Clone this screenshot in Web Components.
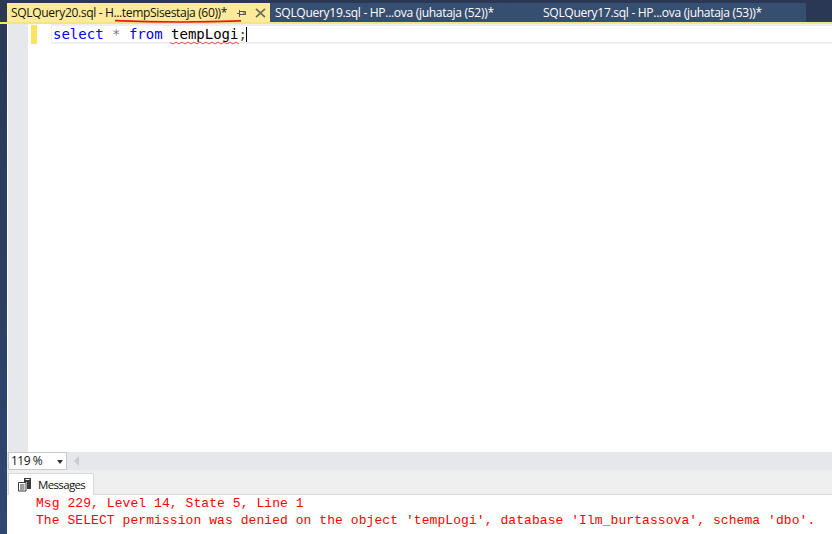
<!DOCTYPE html>
<html><head><meta charset="utf-8"><style>
html,body{margin:0;padding:0;height:534px;width:832px;overflow:hidden;background:#2b3b5a}
</style></head><body>
<ssms-window>
  <doc-tabs slot="tabs">
    <doc-tab active label="SQLQuery20.sql - H...tempSisestaja (60))*"></doc-tab>
    <doc-tab label="SQLQuery19.sql - HP...ova (juhataja (52))*" style="width:268px"></doc-tab>
    <doc-tab label="SQLQuery17.sql - HP...ova (juhataja (53))*" style="width:268px"></doc-tab>
  </doc-tabs>
  <sql-editor slot="editor"></sql-editor>
  <zoom-bar slot="zoom"></zoom-bar>
  <results-pane slot="results">
    <div>Msg 229, Level 14, State 5, Line 1</div>
    <div>The SELECT permission was denied on the object 'tempLogi', database 'Ilm_burtassova', schema 'dbo'.</div>
  </results-pane>
</ssms-window>
<script>
function def(name,html,init){
  customElements.define(name,class extends HTMLElement{
    constructor(){super();this.attachShadow({mode:'open'}).innerHTML=html;}
    connectedCallback(){init&&init(this);}
  });
}
def('ssms-window',`<style>
:host{display:flex;flex-direction:column;width:832px;height:534px;box-sizing:border-box;padding-top:3px;background:linear-gradient(#2a3854,#2c3f62 55%,#2f4773);font-family:"Open Sans","Noto Sans",sans-serif}
.body{flex:1;min-height:0;display:flex;flex-direction:column;margin-left:7px;background:#fff}
</style><slot name="tabs"></slot><div class="body"><slot name="editor"></slot><slot name="zoom"></slot><slot name="results"></slot></div>`);

def('doc-tabs',`<style>
:host{display:flex;height:19px;padding-left:7px;border-bottom:2px solid #f4e57c;flex:none}
</style><slot></slot>`);

def('doc-tab',`<style>
:host{display:block;position:relative;box-sizing:border-box;height:19px;background:#364e70;color:#fff;font:12.1px/19px "Open Sans",sans-serif;white-space:nowrap;padding-left:5px;letter-spacing:-.33px}
:host([active]){background:#fdeb9b;color:#15130a;width:263px;padding-left:4px;letter-spacing:-.38px}
.row{display:flex;align-items:center;height:19px}
.t{flex:none}
.ic{display:none}
:host([active]) .ic{display:block;flex:none}
.pin{position:absolute;left:230px;top:7px}
.x{position:absolute;left:248px;top:5px}
.ul{display:none;position:absolute;left:108px;top:16px}
:host([active]) .ul{display:block}
</style><div class="row"><span class="t"></span></div>
<svg class="ic pin" width="9" height="7" viewBox="0 0 9 7"><path d="M0 3.5H2.5M2.5 0V7M2.5 1.5H8.5V4.5H2.5M7 1.5V4.5" fill="none" stroke="#5b5a4a" stroke-width="1"/></svg>
<svg class="ic x" width="11" height="10" viewBox="0 0 11 10"><path d="M1 0.8L10 9.2M10 0.8L1 9.2" fill="none" stroke="#6b6a58" stroke-width="1.7"/></svg>
<svg class="ul" width="130" height="6" viewBox="0 0 130 6"><path d="M0 1.6C40 3.4 80 3.6 126 1.9" fill="none" stroke="#e81818" stroke-width="1.6"/></svg>`,
el=>{el.shadowRoot.querySelector('.t').textContent=el.getAttribute('label');});

def('sql-editor',`<style>
:host{display:flex;flex:1;min-height:0;background:#fff;padding-left:1px}
.margin{width:20px;background:#e7e8ec;flex:none}
.main{flex:1;min-width:0}
.line{display:flex;height:20px;align-items:flex-start}
.mark{width:6px;margin:1px 0 0 3px;background:#fde35e;height:19px;flex:none}
.cur{flex:1;margin-left:14px;box-sizing:border-box;border:solid #eeeef2;border-width:2px 0 2px 1px;height:20px;padding-left:1px;font:14px/16px "DejaVu Sans Mono",monospace;color:#000;white-space:pre;position:relative}
.k{color:#0000ff}.g{color:#808080}.s{color:#404040}
.caret{display:inline-block;width:1px;height:15px;background:#000;vertical-align:-3px;margin-left:-1px}
.sq{position:absolute;left:118px;top:15px}
</style><div class="margin"></div><div class="main"><div class="line"><div class="mark"></div><div class="cur"><span class="k">select</span> <span class="g">*</span> <span class="k">from</span> <span>tempLogi</span><span class="s">;</span><span class="caret"></span><svg class="sq" width="70" height="4" viewBox="0 0 70 4"><path d="M0 1.5 L3 3 L6 1 L9 3 L12 1 L15 3 L18 1 L21 3 L24 1 L27 3 L30 1 L33 3 L36 1 L39 3 L42 1 L45 3 L48 1 L51 3 L54 1 L57 3 L60 1 L63 3 L66 1 L69 3" fill="none" stroke="#f04a4a" stroke-width="1"/></svg></div></div></div>`);

def('zoom-bar',`<style>
:host{display:flex;height:18px;flex:none;background:#e6e7ec;align-items:stretch;padding:0 0 0 1px}
.box{width:59px;box-sizing:border-box;background:#fff;border:1px solid #c3c9d4;font:12px/16px "Open Sans",sans-serif;color:#111;padding-left:2px;position:relative;letter-spacing:-.5px}
.box::after{content:"";position:absolute;right:3px;top:7px;border:3.5px solid transparent;border-top:4px solid #333;border-bottom:0}
.left{margin:4px 0 0 7px;width:0;height:0;border:5px solid transparent;border-left:0;border-right:5px solid #c9cbd0}
</style><div class="box">119 %</div><div class="left"></div>`);

def('results-pane',`<style>
:host{display:block;flex:none;background:#fff}
.tabs{height:24px;background:#efeff0;border-bottom:1px solid #d9d9d9;padding-left:1px;display:flex;align-items:flex-end}
.tab{width:86px;box-sizing:border-box;background:#fff;border:1px solid #d9d9d9;border-bottom:0;display:flex;align-items:center;gap:6px;padding:0 0 0 8px;margin-bottom:-1px;height:22px;font:11.5px "Open Sans",sans-serif;color:#111;letter-spacing:-.65px}
.msgs{height:39px;box-sizing:border-box;padding:0 0 0 29px;font:13px/17px "Liberation Mono",monospace;letter-spacing:.07px;color:#f00;white-space:nowrap}
</style><div class="tabs"><div class="tab"><svg width="15" height="15" viewBox="0 0 15 15"><path d="M1.5 5.5H9V14H1.5Z" fill="#fff" stroke="#3a3a3a"/><path d="M3 8H7.5M3 10H7.5M3 12H7.5" stroke="#3a3a3a"/><path d="M7 1H14V12H10V5H7Z" fill="#3a3a3a"/><path d="M8.5 2.5H12.5" stroke="#fff"/></svg><span>Messages</span></div></div><div class="msgs"><slot></slot></div>`);
</script>
</body></html>
